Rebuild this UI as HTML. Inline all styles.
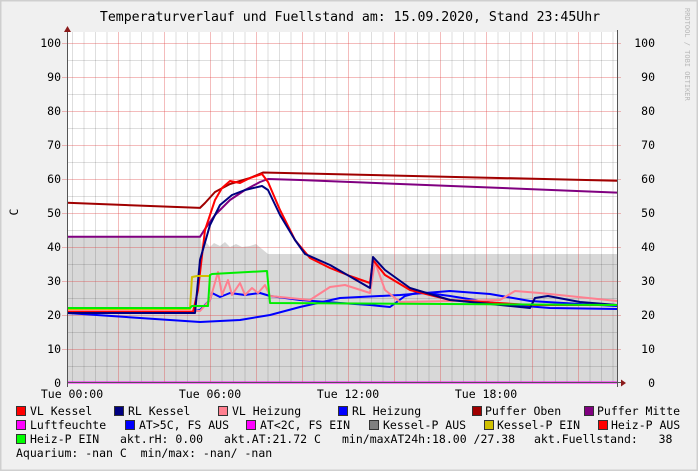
<!DOCTYPE html>
<html><head><meta charset="utf-8"><style>
html,body{margin:0;padding:0;background:#f0f0f0}
svg{display:block}
text{font-family:"DejaVu Sans Mono","Liberation Mono",monospace;fill:#000}
.pre text{white-space:pre}
</style></head><body>
<svg width="698" height="471" viewBox="0 0 698 471" xmlns="http://www.w3.org/2000/svg">
<rect x="0" y="0" width="698" height="471" fill="#f0f0f0"/>
<rect x="0.5" y="0.5" width="697" height="470" fill="none" stroke="#cfcfcf" stroke-width="2"/>
<text x="350" y="21" font-size="13.2" text-anchor="middle">Temperaturverlauf und Fuellstand am: 15.09.2020, Stand 23:45Uhr</text>
<text transform="translate(685,8) rotate(90)" font-size="7" style="fill:#b8b8b8">RRDTOOL / TOBI OETIKER</text>
<rect x="67" y="32" width="550" height="351" fill="#fff"/>
<path d="M67,383 L67,236 L200,236 L202,246 L206,242 L210,247 L214,243 L220,246 L225,242 L230,247 L236,244 L242,247 L250,246 L256,244 L262,249 L268,254 L617,254 L617,383 Z" fill="#d8d8d8"/>
<g stroke="#000" stroke-opacity="0.13" stroke-width="1">
<path d="M72.5,32V383M84,32V383M95.5,32V383M107,32V383M130,32V383M141.5,32V383M153,32V383M176,32V383M187.5,32V383M199,32V383M222,32V383M233.5,32V383M245,32V383M268,32V383M279.5,32V383M291,32V383M314,32V383M325.5,32V383M337,32V383M360,32V383M371.5,32V383M383,32V383M406,32V383M417.5,32V383M429,32V383M452,32V383M463.5,32V383M475,32V383M498,32V383M509.5,32V383M521,32V383M544,32V383M555.5,32V383M567,32V383M590,32V383M601.5,32V383M613,32V383"/>
<path d="M67,60.5H617M67,94.5H617M67,128.5H617M67,162.5H617M67,196.5H617M67,230.5H617M67,264.5H617M67,298.5H617M67,332.5H617M67,366.5H617"/>
</g>
<g stroke="#e04040" stroke-opacity="0.35" stroke-width="1">
<path d="M118.5,32V383M164.5,32V383M210.5,32V383M256.5,32V383M302.5,32V383M348.5,32V383M394.5,32V383M440.5,32V383M486.5,32V383M532.5,32V383M578.5,32V383"/>
<path d="M62,43.5H621M62,77.5H621M62,111.5H621M62,145.5H621M62,179.5H621M62,213.5H621M62,247.5H621M62,281.5H621M62,315.5H621M62,349.5H621"/>
</g>
<g fill="none" stroke-width="2" stroke-linejoin="round">
<path d="M67,202.8 L200,207.9 L205,203 L215,192 L230,184 L250,178 L263,172.5 L617,180.7" stroke="#a00000"/>
<path d="M67,236.8 L200,236.8 L205,229 L215,215 L230,200 L245,190 L260,182 L268,179 L300,180 L617,192.6" stroke="#800080"/>
<path d="M67,313 L140,318 L200,322 L240,320 L270,315 L300,307 L340,298 L400,295 L450,291 L490,294 L530,301 L580,304 L617,306" stroke="#0000ff"/>
<path d="M67,311 L195,311 L200,310 L210,300 L212,293 L220,297 L230,293 L245,295 L260,293 L270,296 L300,300 L340,303 L370,305 L390,307 L405,296 L420,292 L450,296 L500,304 L550,308 L617,309" stroke="#0000ff"/>
<path d="M67,311 L200,311 L210,300 L218,272 L222,295 L228,280 L232,295 L240,283 L245,295 L252,288 L258,293 L265,285 L270,296 L310,300 L330,287 L345,285 L370,293 L375,262 L385,290 L400,302 L500,300 L515,291 L540,293 L617,301" stroke="#ff8090"/>
<path d="M67,312 L193,312 L198,290 L205,230 L215,200 L222,188 L230,181 L240,183 L250,178 L262,174 L268,182 L280,210 L295,240 L310,258 L330,268 L350,276 L370,283 L373,260 L385,275 L410,290 L450,300 L530,305 L617,305" stroke="#ff0000"/>
<path d="M67,313 L195,313 L200,260 L210,225 L220,205 L232,195 L245,190 L262,186 L268,190 L280,215 L295,240 L305,254 L330,265 L370,288 L373,257 L385,270 L410,288 L450,300 L530,308 L535,298 L548,296 L580,302 L617,305" stroke="#000080"/>
<path d="M67,309 L190,309 L192,277 L197,276 L210,276" stroke="#d0c000"/>
<path d="M67,308 L190,308 L192,306 L208,306 L210,275 L212,274 L267,271 L270,303 L617,305" stroke="#00ee00"/>
<path d="M67,382.5 H617" stroke="#ff00ff"/>
</g>
<path d="M67.5,30V387M617.5,30V387" stroke="#555" stroke-width="1"/>
<path d="M67.5,382.5H622" stroke="#555" stroke-width="1"/>
<path d="M64,32 L71,32 L67.5,26 Z" fill="#8b1a1a"/>
<path d="M621,379.5 L621,386.5 L626,383 Z" fill="#8b1a1a"/>
<g font-size="11.5" text-anchor="end">
<text x="61" y="47">100</text><text x="61" y="81">90</text><text x="61" y="115">80</text><text x="61" y="149">70</text><text x="61" y="183">60</text><text x="61" y="217">50</text><text x="61" y="251">40</text><text x="61" y="285">30</text><text x="61" y="319">20</text><text x="61" y="353">10</text><text x="61" y="387">0</text>
<text x="655" y="47">100</text><text x="655" y="81">90</text><text x="655" y="115">80</text><text x="655" y="149">70</text><text x="655" y="183">60</text><text x="655" y="217">50</text><text x="655" y="251">40</text><text x="655" y="285">30</text><text x="655" y="319">20</text><text x="655" y="353">10</text><text x="655" y="387">0</text>
</g>
<text transform="translate(18,212) rotate(-90)" font-size="11.5" text-anchor="middle">C</text>
<g font-size="11.5" text-anchor="middle">
<text x="72" y="398">Tue 00:00</text><text x="210" y="398">Tue 06:00</text><text x="348" y="398">Tue 12:00</text><text x="486" y="398">Tue 18:00</text>
</g>
<g stroke="#333" stroke-width="1">
<rect x="16.5" y="406.5" width="9" height="9" fill="#ff0000"/>
<rect x="114.5" y="406.5" width="9" height="9" fill="#000080"/>
<rect x="218.5" y="406.5" width="9" height="9" fill="#ff8090"/>
<rect x="338.5" y="406.5" width="9" height="9" fill="#0000ff"/>
<rect x="472.5" y="406.5" width="9" height="9" fill="#a00000"/>
<rect x="584.5" y="406.5" width="9" height="9" fill="#800080"/>
<rect x="16.5" y="420.5" width="9" height="9" fill="#ff00ff"/>
<rect x="125.5" y="420.5" width="9" height="9" fill="#0000ff"/>
<rect x="246.5" y="420.5" width="9" height="9" fill="#ff00ff"/>
<rect x="369.5" y="420.5" width="9" height="9" fill="#808080"/>
<rect x="484.5" y="420.5" width="9" height="9" fill="#d0c000"/>
<rect x="598.5" y="420.5" width="9" height="9" fill="#ff0000"/>
<rect x="16.5" y="434.5" width="9" height="9" fill="#00ff00"/>
</g>
<g font-size="11.5" class="pre">
<text x="30" y="415">VL Kessel</text><text x="128" y="415">RL Kessel</text><text x="232" y="415">VL Heizung</text><text x="352" y="415">RL Heizung</text><text x="485" y="415">Puffer Oben</text><text x="597" y="415">Puffer Mitte</text>
<text x="30" y="429">Luftfeuchte</text><text x="139" y="429">AT&gt;5C, FS AUS</text><text x="260" y="429">AT&lt;2C, FS EIN</text><text x="383" y="429">Kessel-P AUS</text><text x="497" y="429">Kessel-P EIN</text><text x="611" y="429">Heiz-P AUS</text>
<text x="30" y="443">Heiz-P EIN</text><text x="120" y="443">akt.rH: 0.00</text><text x="224" y="443">akt.AT:21.72 C</text><text x="342" y="443">min/maxAT24h:18.00 /27.38</text><text x="534" y="443">akt.Fuellstand:   38</text>
<text x="16" y="457">Aquarium: -nan C  min/max: -nan/ -nan</text>
</g>
</svg>
</body></html>
